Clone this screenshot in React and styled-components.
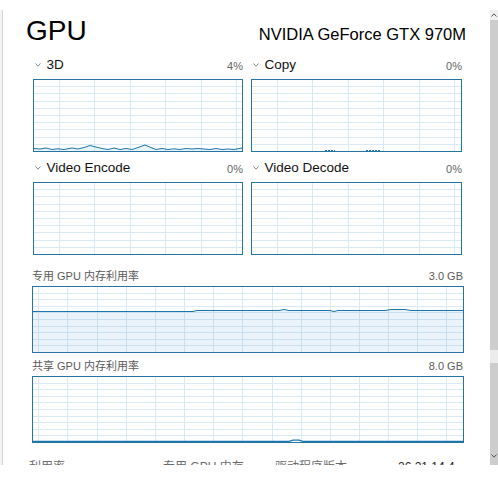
import React from 'react';
import styled, { createGlobalStyle } from 'styled-components';

const Global = createGlobalStyle`
  html, body { margin: 0; padding: 0; background: #fff; }
  body { font-family: "Liberation Sans", "Noto Sans CJK SC", sans-serif; }
`;

const Screen = styled.div`
  width: 498px;
  height: 483px;
  padding-top: 10px;
  box-sizing: border-box;
  background: #fff;
`;

const Viewport = styled.div`
  height: 455px;
  display: flex;
  overflow: hidden;
`;

const Splitter = styled.div`
  flex: none;
  width: 2px;
  background: #f4f4f4;
  border-right: 1px solid #d6d6d6;
`;

const Content = styled.main`
  flex: 1;
  min-width: 0;
  padding: 5px 26px 0 29px;
  display: flex;
  flex-direction: column;
`;

const Header = styled.header`
  display: flex;
  justify-content: space-between;
  align-items: baseline;
  height: 32px;
  margin: 0 -2px 0 -6px;
`;

const Title = styled.h1`
  margin: 0;
  font-size: 28px;
  line-height: 32px;
  font-weight: 400;
  color: #000;
`;

const Model = styled.div`
  font-size: 16.5px;
  line-height: 20px;
  color: #000;
`;

const Engines = styled.section`
  display: grid;
  grid-template-columns: 210px 211px;
  column-gap: 8px;
  row-gap: 8px;
  margin: 10px 0 0 1px;
`;

const Engine = styled.div`
  display: flex;
  flex-direction: column;
`;

const EngineHead = styled.div`
  display: flex;
  justify-content: space-between;
  align-items: flex-start;
  height: 16px;
  margin-bottom: 6px;
`;

const EngineName = styled.div`
  display: flex;
  align-items: center;
  gap: 6px;
  padding-left: 1.5px;
  font-size: 13.5px;
  line-height: 16px;
  color: #111;
`;

const Percent = styled.span`
  font-size: 11px;
  line-height: 16px;
  padding-top: 1px;
  color: #666;
`;

const Graph = styled.div`
  box-sizing: border-box;
  width: ${(p) => p.$w}px;
  height: ${(p) => p.$h}px;
  border: 1px solid #2574a1;
  background: #fff;
  svg { display: block; }
`;

const Memory = styled.section`
  display: flex;
  flex-direction: column;
  margin-top: ${(p) => p.$mt}px;
`;

const MemHead = styled.div`
  display: flex;
  justify-content: space-between;
  font-size: 11px;
  line-height: 14px;
  color: #5a5a5a;
  margin: 0 1px 3px 0;
`;

const Stats = styled.div`
  display: grid;
  grid-template-columns: 134px 112px 123px auto;
  margin: 16px 0 0 -3px;
  font-size: 12px;
  line-height: 16px;
  white-space: nowrap;
`;

const StatLabel = styled.span`
  color: #6a6a6a;
`;

const StatValue = styled.span`
  color: #1a1a1a;
`;

const Scrollbar = styled.div`
  flex: none;
  width: 8px;
  display: flex;
  flex-direction: column;
  background: #cfcfcf;
`;

const ScrollButton = styled.div`
  flex: none;
  height: 10px;
  display: flex;
  align-items: center;
  justify-content: center;
  background: #f0f0f0;
`;

const Thumb = styled.div`
  flex: none;
  height: ${(p) => p.$h}px;
  background: #cdcdcd;
`;

const TrackGap = styled.div`
  flex: none;
  height: 13px;
  background: #ececec;
`;

const LowerTrack = styled.div`
  flex: 1;
  display: flex;
  align-items: flex-end;
  justify-content: center;
  padding-bottom: 7px;
  background: #cdcdcd;
`;

const Chevron = () => (
  <svg width="6" height="4" viewBox="0 0 6 4">
    <polyline points="0.5,0.5 3,3.2 5.5,0.5" fill="none" stroke="#7a7a7a" strokeWidth="0.9" />
  </svg>
);

const Arrow = ({ up }) => (
  <svg width="6" height="4" viewBox="0 0 6 4">
    <polyline
      points={up ? '0.5,3.5 3,0.8 5.5,3.5' : '0.5,0.5 3,3.2 5.5,0.5'}
      fill="none"
      stroke="#505050"
      strokeWidth="1"
    />
  </svg>
);

const GRID = '#d9eaf4';
const LINE = '#1c76aa';
const FILL = 'rgba(17,125,187,0.09)';

function Chart({ w, h, col, off, trace, blips, bottom }) {
  const W = w - 2;
  const H = h - 2;
  const rows = [];
  for (let k = 1; k < 10; k++) rows.push(Math.round((k * (h - 1)) / 10) - 1 + 0.5);
  const cols = [];
  for (let x = off - 1; x < W; x += col) if (x > 0) cols.push(Math.round(x) + 0.5);
  const pts = trace ? trace.map(([x, y]) => `${x},${y}`).join(' ') : '';
  const area = trace ? `0,${H} ${pts} ${W},${H}` : '';
  return (
    <Graph $w={w} $h={h}>
      <svg width={W} height={H} viewBox={`0 0 ${W} ${H}`}>
        <g stroke={GRID} strokeWidth="1" shapeRendering="crispEdges">
          {rows.map((y) => (
            <line key={'r' + y} x1="0" x2={W} y1={y} y2={y} />
          ))}
          {cols.map((x) => (
            <line key={'c' + x} y1="0" y2={H} x1={x} x2={x} />
          ))}
        </g>
        {trace && <polygon points={area} fill={FILL} />}
        {trace && <polyline points={pts} fill="none" stroke={LINE} strokeWidth="1" />}
        {blips &&
          blips.map(([a, b]) => (
            <line key={a} x1={a} x2={b} y1={H - 0.5} y2={H - 0.5} stroke={LINE} strokeWidth="1" strokeDasharray="2 1" />
          ))}
        {bottom && <polyline points={bottom.map(([x, y]) => `${x},${y}`).join(' ')} fill="none" stroke={LINE} strokeWidth="1.2" />}
      </svg>
    </Graph>
  );
}

const threeD = [
  [0, 68.5], [6, 69], [12, 68], [18, 69.5], [24, 68.8], [30, 69.5], [38, 68], [44, 69],
  [50, 67.5], [56, 65.5], [62, 67], [68, 68.5], [74, 69.5], [80, 68], [86, 69.5], [92, 68.5],
  [98, 69.5], [104, 67.5], [111, 65], [117, 67.5], [122, 69.5], [128, 68.5], [134, 69.5],
  [140, 68.8], [146, 69.5], [152, 68.5], [158, 69], [164, 68.5], [170, 69], [176, 69.5],
  [182, 68.5], [188, 69.5], [194, 69], [200, 69.5], [208, 68],
];

const dedicated = [
  [0, 24.5], [160, 24.5], [164, 23.5], [246, 23.5], [251, 22.5], [256, 23.5], [297, 23.5],
  [301, 24.5], [305, 23.5], [352, 23.5], [358, 22.5], [372, 22.5], [378, 23.5], [430, 23.5],
];

const shared = [
  [0, 64.4], [256, 64.4], [260, 63.2], [266, 63.2], [270, 64.4], [430, 64.4],
];

const engines = [
  { name: '3D', pct: '4%', w: 210, trace: threeD },
  { name: 'Copy', pct: '0%', w: 211, blips: [[73, 83], [114, 129]] },
  { name: 'Video Encode', pct: '0%', w: 210 },
  { name: 'Video Decode', pct: '0%', w: 211 },
];

export default function App() {
  return (
    <Screen>
      <Global />
      <Viewport>
        <Splitter />
        <Content>
          <Header>
            <Title>GPU</Title>
            <Model>NVIDIA GeForce GTX 970M</Model>
          </Header>
          <Engines>
            {engines.map((e) => (
              <Engine key={e.name}>
                <EngineHead>
                  <EngineName>
                    <Chevron />
                    <span>{e.name}</span>
                  </EngineName>
                  <Percent>{e.pct}</Percent>
                </EngineHead>
                <Chart w={e.w} h={73} col={35.46} off={25.7} trace={e.trace} blips={e.blips} />
              </Engine>
            ))}
          </Engines>
          <Memory $mt={14}>
            <MemHead>
              <span>专用 GPU 内存利用率</span>
              <span>3.0 GB</span>
            </MemHead>
            <Chart w={432} h={67} col={29.15} off={6.3} trace={dedicated} />
          </Memory>
          <Memory $mt={6}>
            <MemHead>
              <span>共享 GPU 内存利用率</span>
              <span>8.0 GB</span>
            </MemHead>
            <Chart w={432} h={67} col={29.15} off={6.3} bottom={shared} />
          </Memory>
          <Stats>
            <StatLabel>利用率</StatLabel>
            <StatLabel>专用 GPU 内存</StatLabel>
            <StatLabel>驱动程序版本</StatLabel>
            <StatValue>26.21.14.4</StatValue>
          </Stats>
        </Content>
        <Scrollbar>
          <ScrollButton>
            <Arrow up />
          </ScrollButton>
          <Thumb $h={330} />
          <TrackGap />
          <LowerTrack>
            <Arrow />
          </LowerTrack>
        </Scrollbar>
      </Viewport>
    </Screen>
  );
}
